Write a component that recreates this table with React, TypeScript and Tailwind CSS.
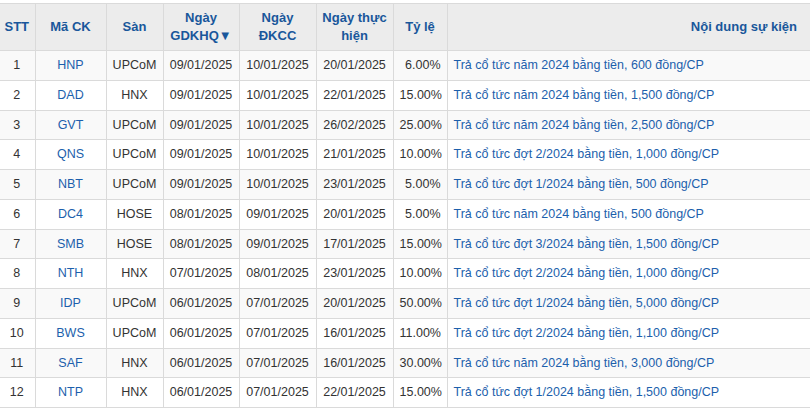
import React from 'react';

type Event = {
  code: string;
  exchange: string;
  exDate: string;
  recordDate: string;
  payDate: string;
  ratio: string;
  content: string;
};

const events: Event[] = [
  { code: 'HNP', exchange: 'UPCoM', exDate: '09/01/2025', recordDate: '10/01/2025', payDate: '20/01/2025', ratio: '6.00%', content: 'Trả cổ tức năm 2024 bằng tiền, 600 đồng/CP' },
  { code: 'DAD', exchange: 'HNX', exDate: '09/01/2025', recordDate: '10/01/2025', payDate: '22/01/2025', ratio: '15.00%', content: 'Trả cổ tức năm 2024 bằng tiền, 1,500 đồng/CP' },
  { code: 'GVT', exchange: 'UPCoM', exDate: '09/01/2025', recordDate: '10/01/2025', payDate: '26/02/2025', ratio: '25.00%', content: 'Trả cổ tức năm 2024 bằng tiền, 2,500 đồng/CP' },
  { code: 'QNS', exchange: 'UPCoM', exDate: '09/01/2025', recordDate: '10/01/2025', payDate: '21/01/2025', ratio: '10.00%', content: 'Trả cổ tức đợt 2/2024 bằng tiền, 1,000 đồng/CP' },
  { code: 'NBT', exchange: 'UPCoM', exDate: '09/01/2025', recordDate: '10/01/2025', payDate: '23/01/2025', ratio: '5.00%', content: 'Trả cổ tức đợt 1/2024 bằng tiền, 500 đồng/CP' },
  { code: 'DC4', exchange: 'HOSE', exDate: '08/01/2025', recordDate: '09/01/2025', payDate: '20/01/2025', ratio: '5.00%', content: 'Trả cổ tức năm 2024 bằng tiền, 500 đồng/CP' },
  { code: 'SMB', exchange: 'HOSE', exDate: '08/01/2025', recordDate: '09/01/2025', payDate: '17/01/2025', ratio: '15.00%', content: 'Trả cổ tức đợt 3/2024 bằng tiền, 1,500 đồng/CP' },
  { code: 'NTH', exchange: 'HNX', exDate: '07/01/2025', recordDate: '08/01/2025', payDate: '23/01/2025', ratio: '10.00%', content: 'Trả cổ tức đợt 2/2024 bằng tiền, 1,000 đồng/CP' },
  { code: 'IDP', exchange: 'UPCoM', exDate: '06/01/2025', recordDate: '07/01/2025', payDate: '20/01/2025', ratio: '50.00%', content: 'Trả cổ tức đợt 1/2024 bằng tiền, 5,000 đồng/CP' },
  { code: 'BWS', exchange: 'UPCoM', exDate: '06/01/2025', recordDate: '07/01/2025', payDate: '16/01/2025', ratio: '11.00%', content: 'Trả cổ tức đợt 2/2024 bằng tiền, 1,100 đồng/CP' },
  { code: 'SAF', exchange: 'HNX', exDate: '06/01/2025', recordDate: '07/01/2025', payDate: '16/01/2025', ratio: '30.00%', content: 'Trả cổ tức năm 2024 bằng tiền, 3,000 đồng/CP' },
  { code: 'NTP', exchange: 'HNX', exDate: '06/01/2025', recordDate: '07/01/2025', payDate: '22/01/2025', ratio: '15.00%', content: 'Trả cổ tức đợt 1/2024 bằng tiền, 1,500 đồng/CP' },
];

export default function App() {
  const th = 'border border-[#dadada] px-1 font-bold text-center align-middle leading-[18px]';
  const td = 'border border-[#dadada] px-[6px] align-middle whitespace-nowrap';

  return (
    <div className="w-[810px] h-[411px] overflow-hidden bg-white pt-[3px] font-['Arial','Liberation_Sans',sans-serif] text-[12.5px]">
      <table className="w-[812px] table-fixed border-collapse -ml-px">
        <colgroup>
          <col className="w-[36px]" />
          <col className="w-[71px]" />
          <col className="w-[57px]" />
          <col className="w-[76px]" />
          <col className="w-[77px]" />
          <col className="w-[77px]" />
          <col className="w-[54px]" />
          <col />
        </colgroup>
        <thead>
          <tr className="h-[47px] bg-[#ececec] text-[#19579b] text-[13px]">
            <th className={`${th} border-l-0`}>STT</th>
            <th className={th}>Mã CK</th>
            <th className={th}>Sàn</th>
            <th className={th}>Ngày<br />GDKHQ▼</th>
            <th className={th}>Ngày<br />ĐKCC</th>
            <th className={th}>Ngày thực<br />hiện</th>
            <th className={th}>Tỷ lệ</th>
            <th className={`${th} border-r-0 text-right pr-[14px]`}>Nội dung sự kiện</th>
          </tr>
        </thead>
        <tbody className="text-[#333333]">
          {events.map((e, i) => (
            <tr key={e.code} className={`h-[29.75px] ${i % 2 === 0 ? 'bg-[#f9f9f9]' : 'bg-white'}`}>
              <td className={`${td} border-l-0 text-center`}>{i + 1}</td>
              <td className={`${td} text-center text-[#1c5fac]`}>{e.code}</td>
              <td className={`${td} text-center`}>{e.exchange}</td>
              <td className={`${td} text-center`}>{e.exDate}</td>
              <td className={`${td} text-center`}>{e.recordDate}</td>
              <td className={`${td} text-center`}>{e.payDate}</td>
              <td className={`${td} text-right`}>{e.ratio}</td>
              <td className={`${td} border-r-0 text-[#1c5fac]`}>{e.content}</td>
            </tr>
          ))}
        </tbody>
      </table>
    </div>
  );
}
